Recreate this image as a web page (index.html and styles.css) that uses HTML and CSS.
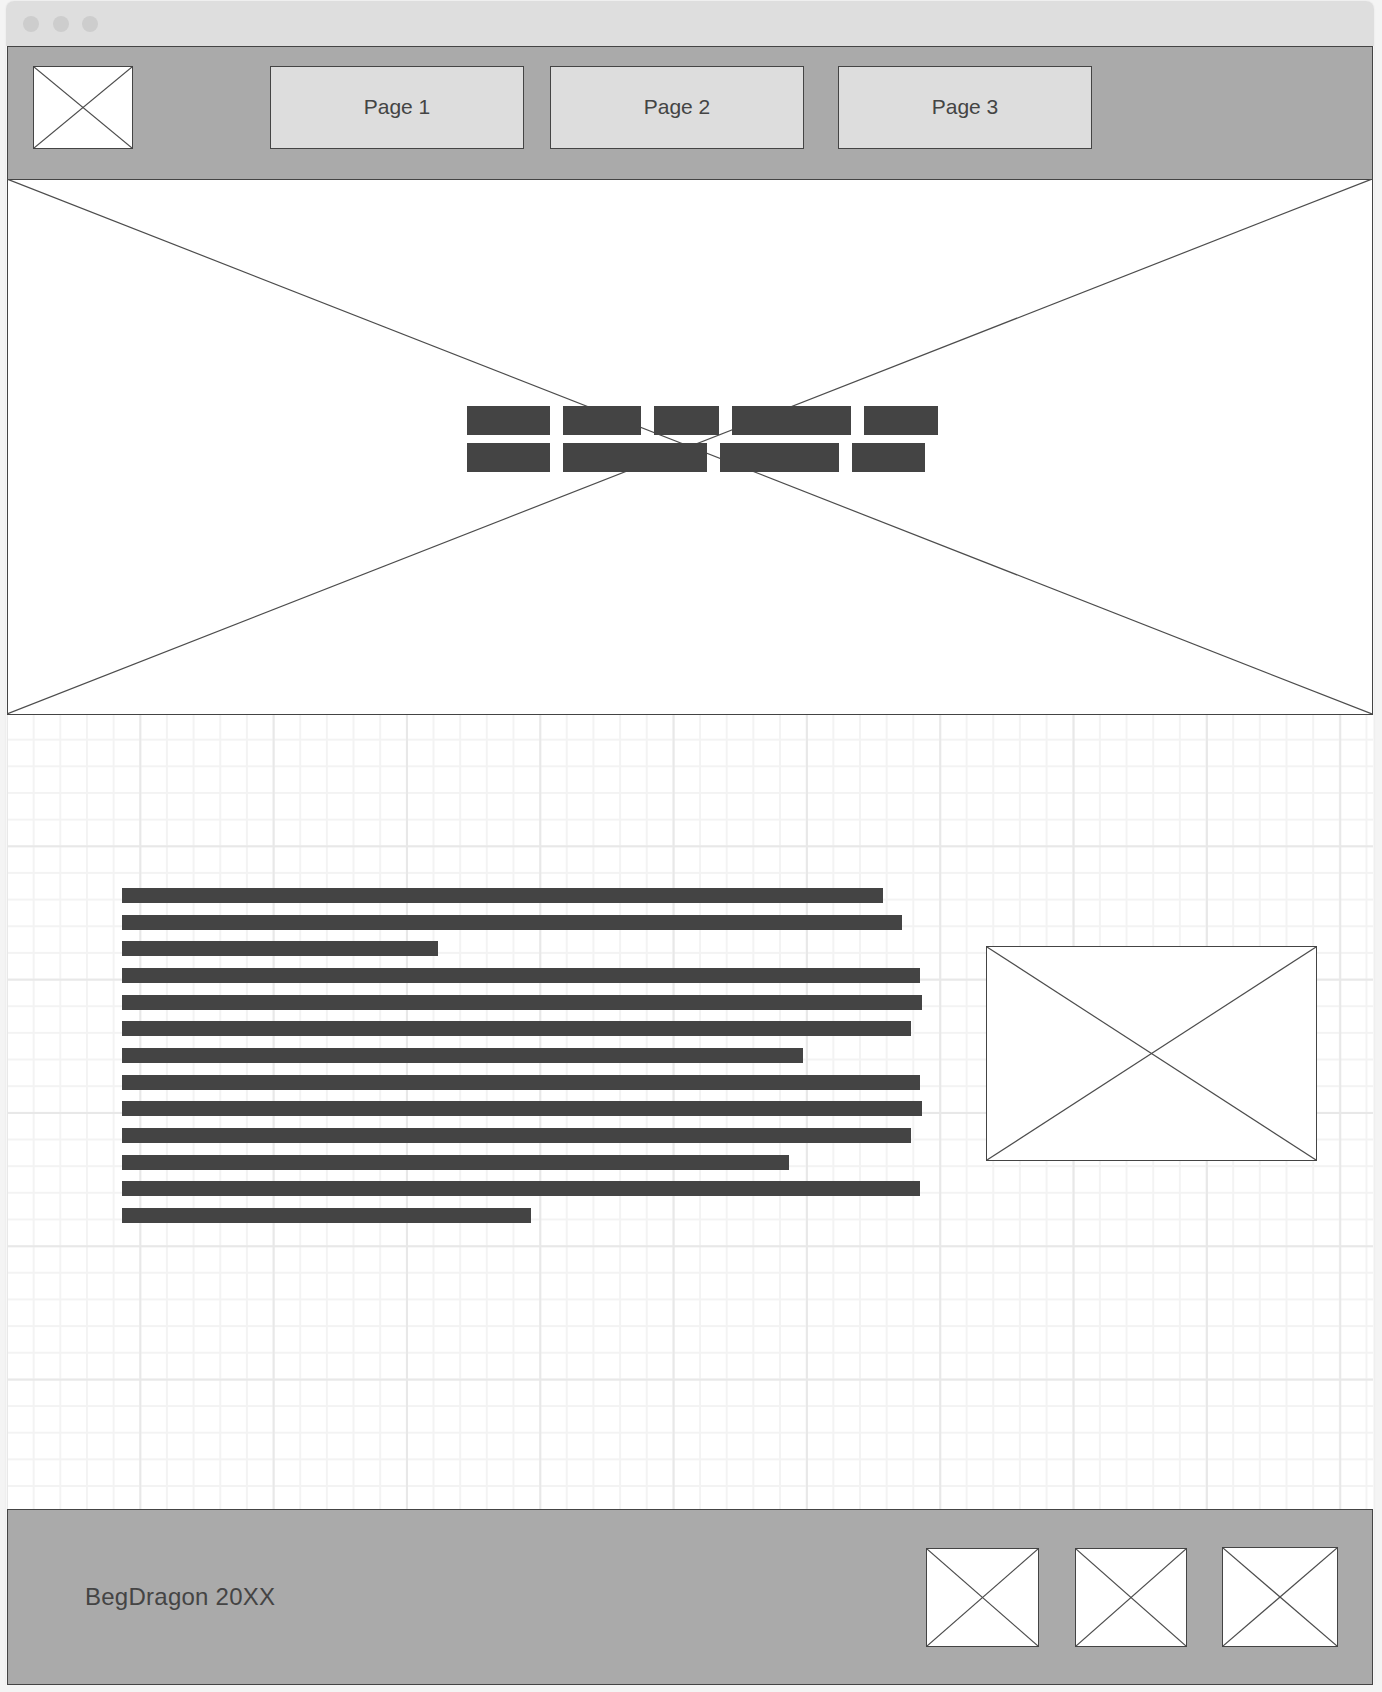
FILE: index.html
```html
<!DOCTYPE html>
<html lang="en">
<head>
  <meta charset="UTF-8">
  <meta name="viewport" content="width=device-width, initial-scale=1.0">
  <title>BegDragon Wireframe</title>
  <link rel="stylesheet" href="styles.css">
</head>
<body>
  <div class="window">
    <div class="titlebar">
      <span class="dot"></span>
      <span class="dot"></span>
      <span class="dot"></span>
    </div>

    <div class="page">
      <header class="site-header">
        <div class="ph logo">
          <svg viewBox="0 0 100 100" preserveAspectRatio="none"><line x1="0" y1="0" x2="100" y2="100"/><line x1="100" y1="0" x2="0" y2="100"/></svg>
        </div>
        <nav class="nav">
          <a class="nav-btn nav-1" href="#">Page 1</a>
          <a class="nav-btn nav-2" href="#">Page 2</a>
          <a class="nav-btn nav-3" href="#">Page 3</a>
        </nav>
      </header>

      <section class="hero">
        <svg class="hero-cross" viewBox="0 0 100 100" preserveAspectRatio="none"><line x1="0" y1="0" x2="100" y2="100"/><line x1="100" y1="0" x2="0" y2="100"/></svg>
        <div class="hero-text">
          <div class="word-row">
            <span class="word" style="width:83px"></span>
            <span class="word" style="width:78px"></span>
            <span class="word" style="width:65px"></span>
            <span class="word" style="width:119px"></span>
            <span class="word" style="width:74px"></span>
          </div>
          <div class="word-row">
            <span class="word" style="width:83px"></span>
            <span class="word" style="width:144px"></span>
            <span class="word" style="width:119px"></span>
            <span class="word" style="width:73px"></span>
          </div>
        </div>
      </section>

      <main class="content">
        <div class="text-lines">
          <span class="line" style="width:761px"></span>
          <span class="line" style="width:780px"></span>
          <span class="line" style="width:316px"></span>
          <span class="line" style="width:798px"></span>
          <span class="line" style="width:800px"></span>
          <span class="line" style="width:789px"></span>
          <span class="line" style="width:681px"></span>
          <span class="line" style="width:798px"></span>
          <span class="line" style="width:800px"></span>
          <span class="line" style="width:789px"></span>
          <span class="line" style="width:667px"></span>
          <span class="line" style="width:798px"></span>
          <span class="line" style="width:409px"></span>
        </div>
        <div class="ph side-image">
          <svg viewBox="0 0 100 100" preserveAspectRatio="none"><line x1="0" y1="0" x2="100" y2="100"/><line x1="100" y1="0" x2="0" y2="100"/></svg>
        </div>
      </main>

      <footer class="site-footer">
        <p class="copyright">BegDragon 20XX</p>
        <div class="socials">
          <div class="ph social s1">
            <svg viewBox="0 0 100 100" preserveAspectRatio="none"><line x1="0" y1="0" x2="100" y2="100"/><line x1="100" y1="0" x2="0" y2="100"/></svg>
          </div>
          <div class="ph social s2">
            <svg viewBox="0 0 100 100" preserveAspectRatio="none"><line x1="0" y1="0" x2="100" y2="100"/><line x1="100" y1="0" x2="0" y2="100"/></svg>
          </div>
          <div class="ph social s3">
            <svg viewBox="0 0 100 100" preserveAspectRatio="none"><line x1="0" y1="0" x2="100" y2="100"/><line x1="100" y1="0" x2="0" y2="100"/></svg>
          </div>
        </div>
      </footer>
    </div>
  </div>
</body>
</html>
```

FILE: styles.css
```css
* {
  box-sizing: border-box;
}

body {
  font-family: "Liberation Sans", Arial, sans-serif;
  background-color: #f4f4f4;
  color: #444;
  margin: 0;
}

.window {
  width: 1368px;
  margin: 1px 0 0 6px;
  padding: 0 1px;
  background: #f7f7f7;
  border-radius: 8px 8px 0 0;
  box-shadow: 0 0 2px rgba(0, 0, 0, 0.08);
}

.titlebar {
  height: 45px;
  margin: 0 -1px;
  padding-left: 17px;
  display: flex;
  align-items: center;
  gap: 13.5px;
  background: #dedede;
  border-radius: 8px 8px 0 0;
}

.dot {
  width: 16px;
  height: 16px;
  border-radius: 50%;
  background: #cdcdcd;
}

.page {
  width: 1366px;
}

/* placeholder boxes with an X */
.ph {
  background: #fff;
  border: 1px solid #444;
}

.ph svg {
  display: block;
  width: 100%;
  height: 100%;
}

svg line {
  stroke: #4d4d4d;
  stroke-width: 1.2;
  vector-effect: non-scaling-stroke;
}

/* header */
.site-header {
  height: 134px;
  display: flex;
  align-items: flex-start;
  padding: 19px 0 0 25px;
  background: #aaa;
  border: 1px solid #444;
}

.logo {
  width: 100px;
  height: 83px;
}

.nav {
  display: flex;
  margin-left: 137px;
}

.nav-btn {
  width: 254px;
  height: 83px;
  display: flex;
  align-items: center;
  justify-content: center;
  padding-bottom: 2px;
  background: #ddd;
  border: 1px solid #444;
  color: #444;
  font-size: 21px;
  text-decoration: none;
}

.nav-2 {
  margin-left: 26px;
}

.nav-3 {
  margin-left: 34px;
}

/* hero */
.hero {
  position: relative;
  height: 535px;
  padding: 226px 0 0 459px;
  background: #fff;
  border: 1px solid #444;
  border-top: none;
}

.hero-cross {
  position: absolute;
  top: -1px;
  left: -1px;
  width: calc(100% + 1px);
  height: calc(100% + 1px);
}

.hero-text {
  position: relative;
  display: flex;
  flex-direction: column;
  gap: 8px;
}

.word-row {
  display: flex;
  gap: 13px;
}

.word {
  height: 29px;
  background: #444;
}

/* grid canvas */
.content {
  height: 794px;
  display: flex;
  align-items: flex-start;
  padding: 173px 0 0 115px;
  background-color: #fff;
  background-image:
    linear-gradient(#e8e8e8 2px, transparent 2px),
    linear-gradient(90deg, #e8e8e8 2px, transparent 2px),
    linear-gradient(#f3f3f3 2px, transparent 2px),
    linear-gradient(90deg, #f3f3f3 2px, transparent 2px);
  background-size:
    133.333px 133.333px,
    133.333px 133.333px,
    26.667px 26.667px,
    26.667px 26.667px;
  background-position: -1px -3px, -1px -3px, -1px -3px, -1px -3px;
}

.text-lines {
  width: 800px;
  display: flex;
  flex-direction: column;
  gap: 11.67px;
}

.line {
  display: block;
  height: 15px;
  background: #444;
}

.side-image {
  width: 331px;
  height: 215px;
  margin: 58px 0 0 64px;
}

/* footer */
.site-footer {
  height: 176px;
  display: flex;
  align-items: center;
  justify-content: space-between;
  padding: 0 34px 0 77px;
  background: #aaa;
  border: 1px solid #444;
}

.copyright {
  margin: 0;
  font-size: 24px;
  letter-spacing: 0.25px;
  color: #444;
}

.socials {
  display: flex;
  align-items: center;
}

.s1 {
  width: 113px;
  height: 99px;
}

.s2 {
  width: 112px;
  height: 99px;
  margin-left: 36px;
}

.s3 {
  width: 116px;
  height: 100px;
  margin-left: 35px;
}
```
